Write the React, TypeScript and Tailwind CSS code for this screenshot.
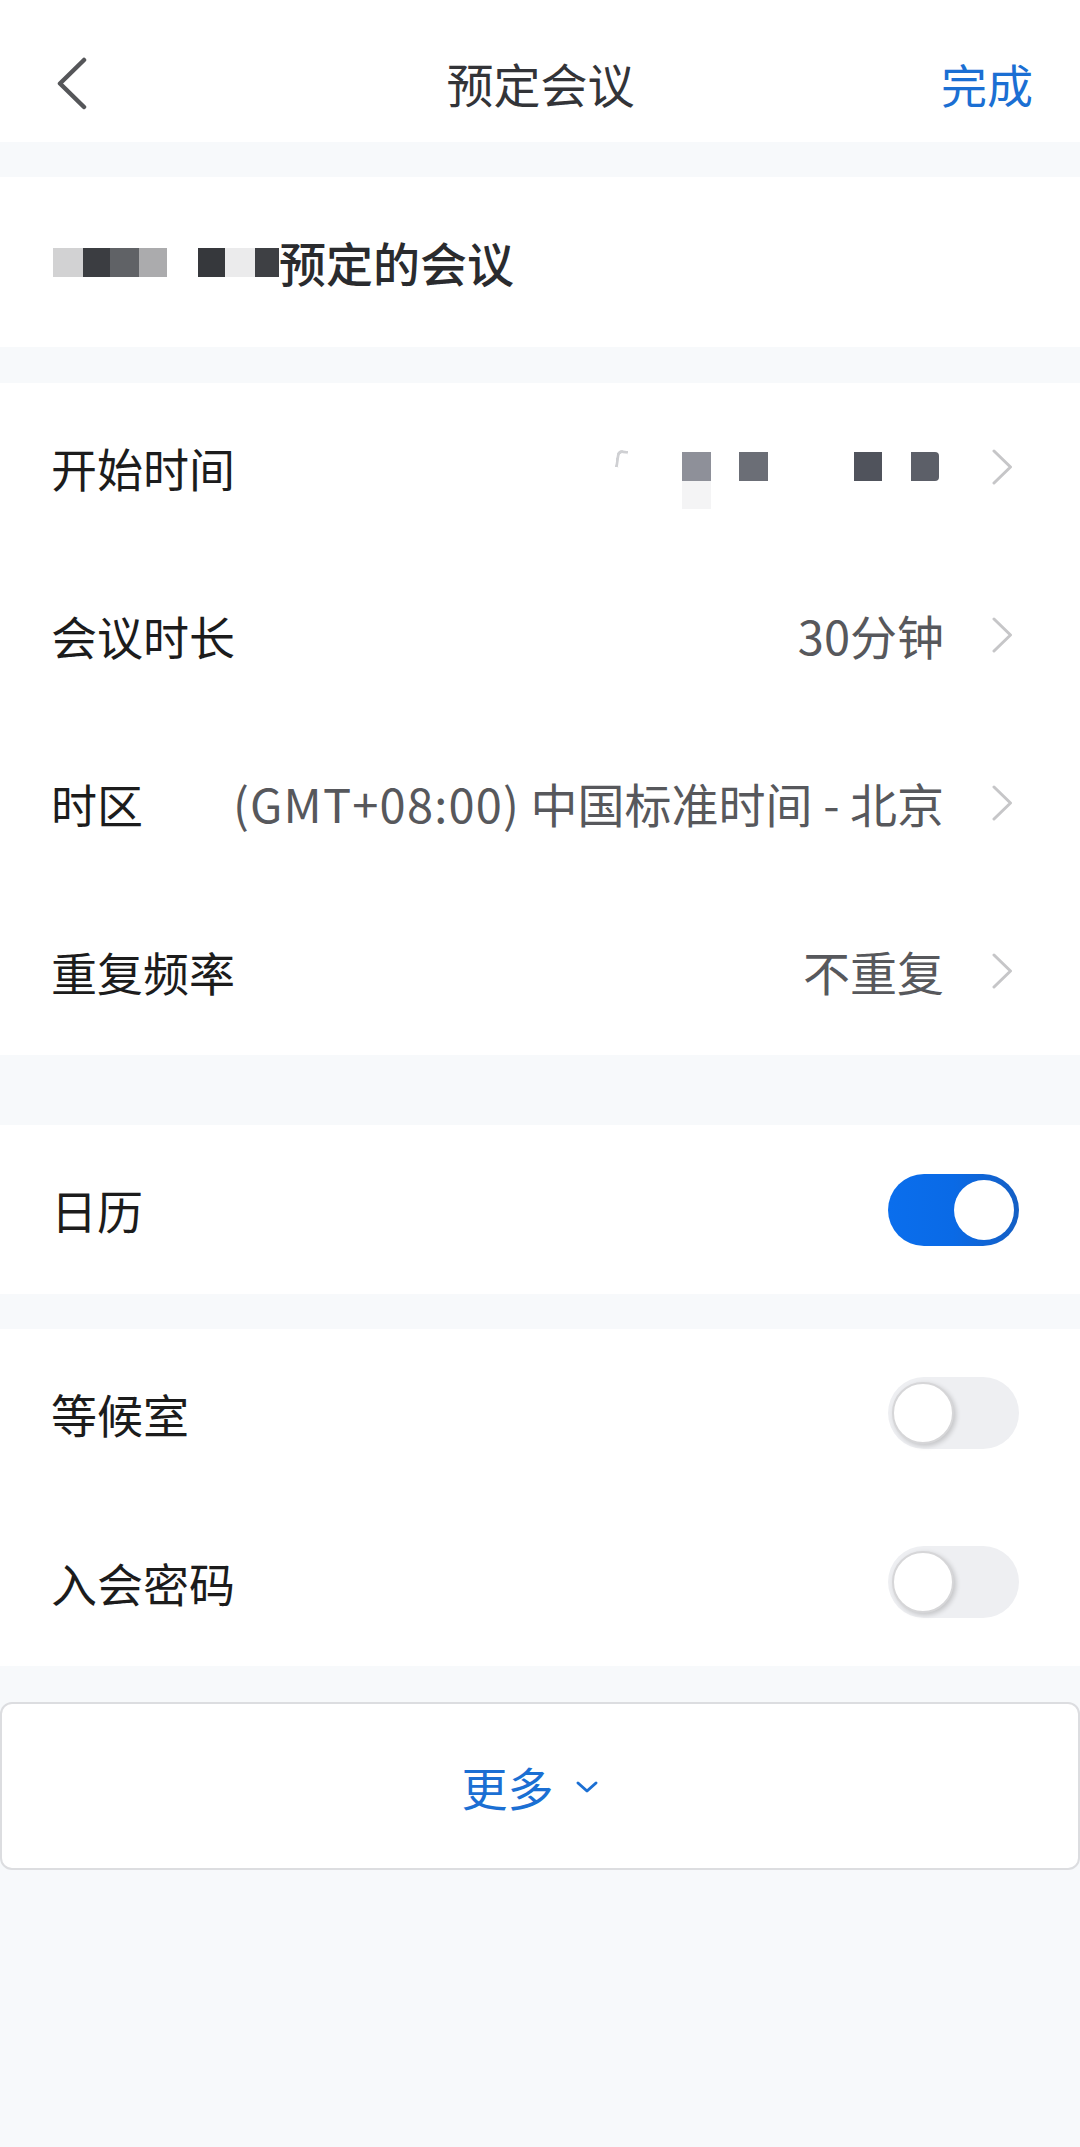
import React from "react";

const FONT = { fontFamily: '"Noto Sans CJK SC", "Noto Sans", sans-serif' };

function ChevronRight() {
  return (
    <svg width="22" height="36" viewBox="0 0 22 36" className="shrink-0">
      <polyline points="3,2 19.5,18 3,34" fill="none" stroke="#c6c6c8" strokeWidth="3" strokeLinecap="round" strokeLinejoin="round" />
    </svg>
  );
}

function Row({ label, value, children }: { label: string; value?: React.ReactNode; children?: React.ReactNode }) {
  return (
    <div className="flex h-[168px] items-center pl-[51px] pr-[67px]">
      <div className="shrink-0 text-[46px] text-[#1c1c1c]">{label}</div>
      <div className="ml-auto flex items-center">
        {value !== undefined && <div className="text-[47px] text-[#57585c] whitespace-nowrap">{value}</div>}
        {children}
        <div className="ml-[47px]">
          <ChevronRight />
        </div>
      </div>
    </div>
  );
}

function Toggle({ on }: { on: boolean }) {
  if (on) {
    return (
      <div className="flex h-[72px] w-[131px] items-center justify-end rounded-full bg-gradient-to-r from-[#0a6eed] via-[#0a6ae6] to-[#145fc4] pr-[5px]">
        <div className="h-[60px] w-[60px] rounded-full bg-white" />
      </div>
    );
  }
  return (
    <div className="flex h-[72px] w-[131px] items-center justify-start rounded-full bg-[#eeeff2] pl-[4px]">
      <div className="h-[62px] w-[62px] rounded-full border-[2px] border-[#d6d6d8] bg-white shadow-[2px_2px_5px_rgba(0,0,0,0.18)]" />
    </div>
  );
}

function ToggleRow({ label, on }: { label: string; on: boolean }) {
  return (
    <div className="flex h-[168px] items-center pl-[51px] pr-[61px]">
      <div className="text-[46px] text-[#1c1c1c]">{label}</div>
      <div className="ml-auto">
        <Toggle on={on} />
      </div>
    </div>
  );
}

export default function App() {
  return (
    <div className="min-h-[2147px] w-[1080px] bg-[#f7f9fb]" style={FONT}>
      {/* Header */}
      <div className="flex h-[142px] items-center bg-white pt-[24px] pl-[56px] pr-[47px]">
        <svg width="32" height="53" viewBox="0 0 32 53" className="shrink-0">
          <polyline points="28,3 4,26.5 28,50" fill="none" stroke="#555659" strokeWidth="4.5" strokeLinecap="round" strokeLinejoin="round" />
        </svg>
        <div className="flex-1 text-center text-[47px] text-[#333438] pl-[52px]">预定会议</div>
        <div className="text-[46px] text-[#1b6fd3]">完成</div>
      </div>

      <div className="h-[35px]" />

      {/* Title */}
      <div className="flex h-[170px] items-center bg-white pl-[53px]">
        <div className="flex h-[29px] items-stretch">
          <div className="w-[30px] bg-[#d2d2d3]" />
          <div className="w-[27px] bg-[#3b3d41]" />
          <div className="w-[29px] bg-[#606266]" />
          <div className="w-[28px] bg-[#ababad]" />
          <div className="w-[31px] bg-white" />
          <div className="w-[27px] bg-[#36383c]" />
          <div className="w-[30px] bg-[#ebebec]" />
          <div className="w-[24px] bg-[#3e4044]" />
        </div>
        <div className="text-[47px] font-medium text-[#2a2b2e]">预定的会议</div>
      </div>

      <div className="h-[36px]" />

      {/* Time section */}
      <div className="bg-white">
        <Row label="开始时间">
          <div className="relative flex h-[30px] items-start">
            <div className="mr-[55px] -mt-[2px] h-[18px] w-[11px] border-l-[3px] border-t-[3px] border-[#cfd0d3] [border-top-left-radius:6px] rotate-[8deg]" />
            <div className="relative h-[29px] w-[29px] bg-[#8e9099]">
              <div className="absolute left-0 top-[29px] h-[28px] w-[29px] bg-[#f4f4f5]" />
            </div>
            <div className="ml-[28px] h-[29px] w-[29px] bg-[#6b6e76]" />
            <div className="ml-[86px] h-[29px] w-[28px] bg-[#50535c]" />
            <div className="ml-[29px] h-[29px] w-[28px] rounded-r-[4px] bg-[#5c5f68]" />
            <div className="w-[5px]" />
          </div>
        </Row>
        <Row label="会议时长" value="30分钟" />
        <Row
          label="时区"
          value={
            <>
              <span className="tracking-[1.2px]">(GMT+08:00)</span> 中国标准时间 - 北京
            </>
          }
        />
        <Row label="重复频率" value="不重复" />
      </div>

      <div className="h-[70px]" />

      {/* Calendar */}
      <div className="bg-white">
        <div className="flex h-[169px] items-center pl-[51px] pr-[61px]">
          <div className="text-[46px] text-[#1c1c1c]">日历</div>
          <div className="ml-auto">
            <Toggle on={true} />
          </div>
        </div>
      </div>

      <div className="h-[35px]" />

      {/* Waiting room / password */}
      <div className="bg-white">
        <ToggleRow label="等候室" on={false} />
        <div className="h-[1px]" />
        <ToggleRow label="入会密码" on={false} />
      </div>

      <div className="h-[36px]" />

      {/* More button */}
      <div className="flex h-[168px] items-center justify-center rounded-[12px] border-[2px] border-[#dcdde0] bg-white pr-[20px]">
        <div className="text-[46px] text-[#1b6fd3]">更多</div>
        <svg width="24" height="14" viewBox="0 0 24 14" className="ml-[21px] mt-[2px]">
          <polyline points="3,3 12,11 21,3" fill="none" stroke="#1b6fd3" strokeWidth="3" strokeLinecap="round" strokeLinejoin="round" />
        </svg>
      </div>
    </div>
  );
}
